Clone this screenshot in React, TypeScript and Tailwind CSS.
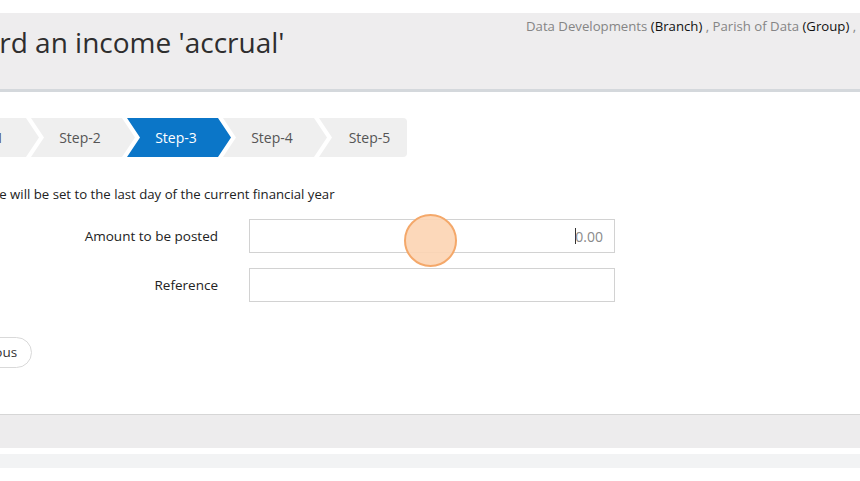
import React from "react";

const steps = ["Step-1", "Step-2", "Step-3", "Step-4", "Step-5"];

function Steps() {
  return (
    <div className="flex h-[39px] -ml-[65px]">
      {steps.map((s, i) => {
        const active = i === 2;
        const first = i === 0;
        const last = i === steps.length - 1;
        let shape = "[clip-path:polygon(0_0,calc(100%-13px)_0,100%_50%,calc(100%-13px)_100%,0_100%,13px_50%)]";
        if (first) shape = "[clip-path:polygon(0_0,calc(100%-13px)_0,100%_50%,calc(100%-13px)_100%,0_100%)] rounded-l";
        if (last) shape = "[clip-path:polygon(0_0,100%_0,100%_100%,0_100%,13px_50%)] rounded-r";
        return (
          <div
            key={s}
            className={`flex h-full items-center justify-center text-[14px] ${shape} ${
              last ? "w-[88px] pl-[13px]" : first ? "w-[104px] pr-[8px]" : "w-[104px] pr-[6px]"
            } ${i > 0 ? "-ml-[8px]" : ""} ${active ? "bg-[#0b76c8] text-white" : "bg-[#efefef] text-[#555]"}`}
          >
            {s}
          </div>
        );
      })}
    </div>
  );
}

export default function App() {
  return (
    <div className="relative h-[481px] w-[860px] overflow-hidden bg-white font-['Open_Sans',sans-serif] text-[#333]">
      <div className="h-[13px]" />
      {/* page header */}
      <div className="flex h-[79px] border-b-[3px] border-[#d4d8dc] bg-[#eeedee]">
        <div className="-ml-[64px] w-[590px] shrink-0 pt-[12px] text-[28px] leading-[34px] text-[#2e2e2e]">
          Record an income 'accrual'
        </div>
        <div className="shrink-0 whitespace-nowrap pt-[3px] text-[13.2px] leading-[20px] text-[#858585]">
          Data Developments <span className="text-[#111]">(Branch)</span> , Parish of Data{" "}
          <span className="text-[#111]">(Group)</span> , Diocese of Data <span className="text-[#111]">(Diocese)</span>
        </div>
      </div>

      <div className="pt-[26px]">
        <Steps />
      </div>

      <div className="-ml-[47px] mt-[27px] whitespace-nowrap text-[13.2px] leading-[20px] text-[#222]">
        The date will be set to the last day of the current financial year
      </div>

      <div className="mt-[15px] flex flex-col gap-[15px]">
        <div className="flex items-center">
          <div className="w-[218px] text-right text-[13.5px] text-[#222]">Amount to be posted</div>
          <div className="ml-[31px] flex h-[34px] w-[366px] items-center justify-end border border-[#d2d2d2] px-[11px] text-[14px] text-[#8a8a8a]">
            <span className="-mr-px inline-block h-[16px] w-px bg-[#333]" />
            0.00
          </div>
        </div>
        <div className="flex items-center">
          <div className="w-[218px] text-right text-[13.5px] text-[#222]">Reference</div>
          <div className="ml-[31px] h-[34px] w-[366px] border border-[#d2d2d2]" />
        </div>
      </div>

      <div className="mt-[35px]">
        <button className="-ml-[52px] h-[31px] rounded-full border border-[#d9d9d9] bg-white px-[14px] text-[13.5px] text-[#333]">
          Previous
        </button>
      </div>

      {/* footer bands */}
      <div className="mt-[46px] h-[34px] border-t border-[#d6d6d6] bg-[#edeced]" />
      <div className="mt-[6px] h-[14px] bg-[#f2f3f4]" />

      {/* click indicator */}
      <div className="absolute left-[404px] top-[214px] h-[53px] w-[53px] rounded-full border-2 border-[#f4a86a] bg-[#fcd4b2]/90" />
    </div>
  );
}
